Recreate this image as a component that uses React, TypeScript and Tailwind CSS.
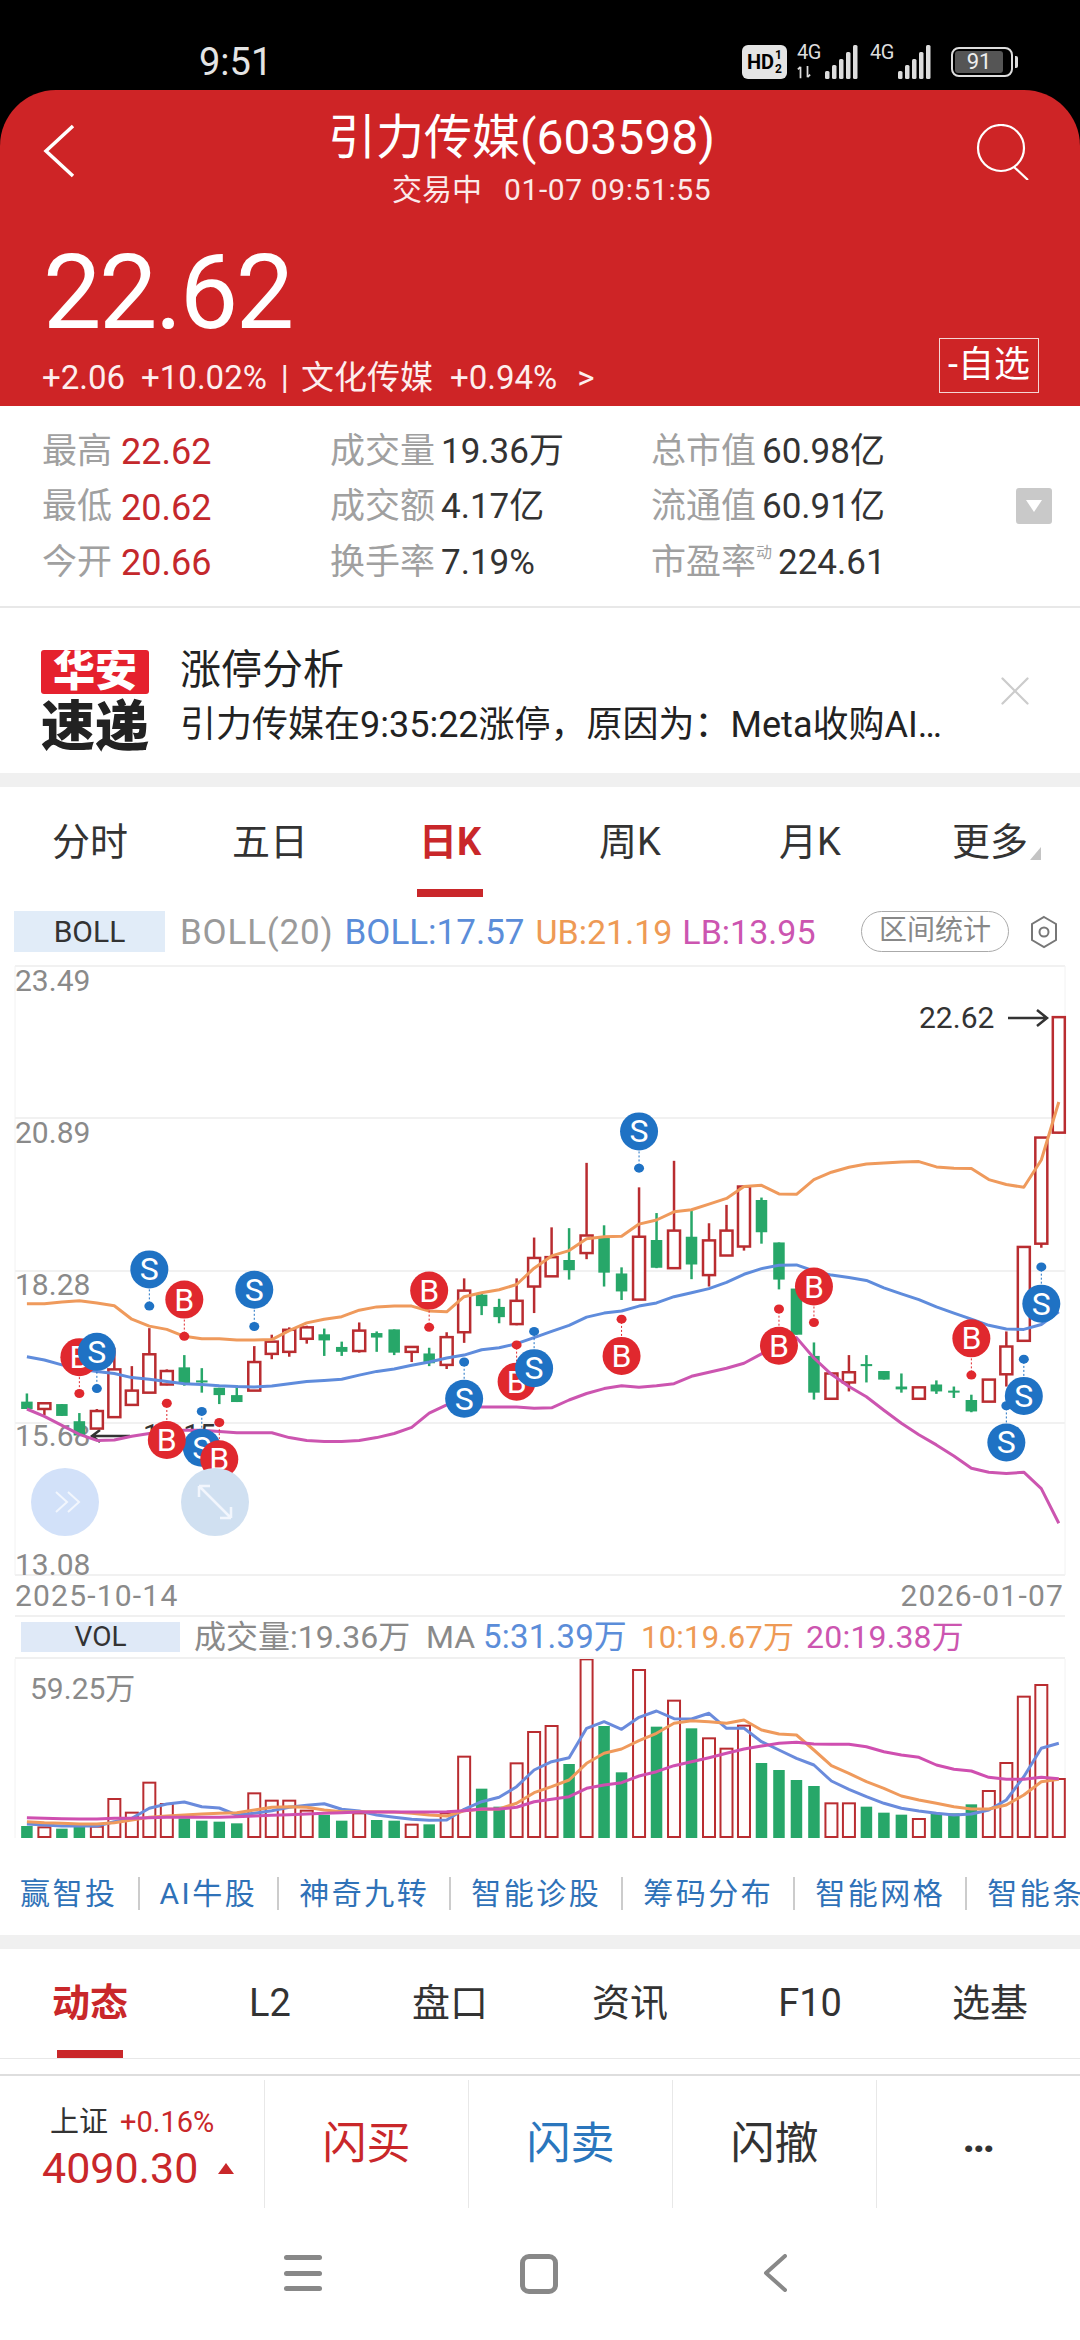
import React from 'react';
import { X } from 'lucide-react';

// [wickTop, bodyTop, bodyBottom, wickBottom, isRed] measured off the reference
type Candle = [number, number, number, number, number];

const candles: Candle[] = [
  [1062, 1082, 1100, 1100, 0], [1086, 1086, 1100, 1115, 1], [1088, 1088, 1117, 1117, 0], [1110, 1130, 1165, 1165, 0],
  [1100, 1105, 1148, 1148, 1], [950, 1003, 1120, 1120, 1], [995, 1055, 1090, 1090, 1], [902, 966, 1060, 1060, 1],
  [1003, 1007, 1040, 1042, 1], [968, 998, 1038, 1043, 0], [1000, 1030, 1035, 1060, 0], [1048, 1048, 1066, 1088, 0],
  [1042, 1066, 1083, 1083, 0], [946, 985, 1055, 1055, 1], [918, 935, 965, 978, 1], [900, 906, 960, 972, 1],
  [896, 900, 928, 940, 1], [903, 917, 932, 970, 0], [935, 948, 960, 970, 0], [888, 908, 958, 962, 1],
  [910, 914, 925, 960, 0], [905, 905, 962, 968, 0], [948, 948, 960, 985, 1], [950, 964, 988, 995, 0],
  [912, 924, 992, 1002, 1], [780, 810, 912, 938, 1], [818, 820, 848, 870, 0], [830, 850, 875, 890, 0],
  [780, 835, 892, 895, 1], [680, 730, 800, 865, 1], [655, 728, 775, 775, 1], [657, 735, 760, 783, 0],
  [497, 675, 718, 733, 1], [650, 677, 766, 800, 0], [753, 768, 812, 833, 0], [557, 678, 832, 832, 1],
  [620, 686, 754, 755, 0], [492, 663, 755, 755, 1], [610, 678, 746, 782, 0], [645, 687, 772, 800, 1],
  [600, 663, 724, 725, 1], [553, 555, 702, 712, 1], [582, 588, 667, 695, 0], [692, 692, 783, 807, 0],
  [805, 805, 918, 918, 0], [937, 970, 1060, 1077, 0], [1013, 1013, 1075, 1075, 1], [968, 1010, 1035, 1057, 1],
  [968, 990, 995, 1035, 0], [1007, 1007, 1028, 1028, 0], [1013, 1045, 1052, 1060, 0], [1047, 1047, 1075, 1075, 1],
  [1030, 1040, 1057, 1063, 0], [1045, 1055, 1060, 1073, 0], [1065, 1078, 1106, 1108, 0], [1028, 1028, 1082, 1082, 1],
  [910, 947, 1015, 1045, 1], [703, 703, 933, 933, 1], [435, 435, 695, 705, 1], [140, 140, 423, 425, 1],
];

const ubLine = [842, 842, 838, 835, 840, 847, 880, 897, 905, 922, 928, 928, 931, 931, 930, 908, 889, 880, 874, 858, 850, 848, 848, 860, 862, 825, 815, 808, 795, 755, 725, 712, 683, 678, 677, 647, 637, 617, 612, 598, 584, 555, 552, 573, 574, 538, 520, 508, 500, 497, 495, 494, 507, 510, 511, 538, 550, 557, 490, 348];
const bollLine = [972, 980, 992, 1002, 1008, 1013, 1023, 1027, 1033, 1038, 1040, 1043, 1045, 1046, 1044, 1038, 1033, 1030, 1027, 1017, 1008, 1002, 993, 985, 975, 968, 955, 950, 940, 925, 910, 895, 875, 865, 860, 848, 840, 825, 815, 805, 790, 770, 756, 748, 747, 762, 772, 778, 785, 803, 818, 832, 850, 865, 880, 895, 904, 905, 893, 862];
const lbLine = [1100, 1118, 1140, 1162, 1177, 1176, 1167, 1160, 1155, 1152, 1152, 1155, 1158, 1158, 1158, 1170, 1177, 1180, 1180, 1177, 1170, 1160, 1145, 1110, 1090, 1090, 1095, 1095, 1095, 1098, 1097, 1078, 1062, 1050, 1043, 1047, 1043, 1038, 1020, 1010, 1000, 988, 965, 935, 925, 975, 1015, 1045, 1070, 1103, 1135, 1163, 1188, 1215, 1245, 1255, 1258, 1255, 1295, 1380];

// [index, label, circleY, dotY]
const markers: [number, string, number, number][] = [
  [3, 'B', 973, 1062], [4, 'S', 960, 1050], [7, 'S', 758, 848], [9, 'B', 832, 922], [13, 'S', 808, 898],
  [10, 'S', 1195, 1106], [8, 'B', 1176, 1086], [11, 'B', 1223, 1133], [23, 'B', 810, 900], [25, 'S', 1075, 985],
  [28, 'B', 1033, 943], [29, 'S', 1000, 910], [35, 'S', 420, 510], [34, 'B', 970, 880], [43, 'B', 945, 855],
  [45, 'B', 800, 888], [54, 'B', 927, 1017], [58, 'S', 842, 752], [56, 'S', 1182, 1092], [57, 'S', 1068, 978],
];

const volBars: [number, number][] = [
  [678, 0], [682, 1], [686, 0], [680, 0], [680, 1], [597, 1], [638, 1], [548, 1], [612, 1], [655, 0],
  [662, 0], [665, 0], [670, 0], [580, 1], [602, 1], [602, 1], [632, 1], [645, 0], [662, 0], [640, 1],
  [660, 0], [662, 0], [674, 1], [673, 0], [640, 1], [470, 1], [566, 0], [620, 0], [490, 1], [396, 1],
  [378, 1], [492, 0], [178, 1], [378, 0], [517, 0], [210, 1], [380, 0], [302, 1], [385, 0], [415, 1],
  [446, 1], [377, 1], [489, 0], [510, 0], [540, 0], [558, 0], [610, 1], [610, 1], [620, 0], [638, 0],
  [644, 0], [657, 1], [640, 0], [640, 0], [613, 0], [573, 1], [489, 1], [290, 1], [255, 1], [537, 1],
];

const volMa5 = [672, 675, 678, 678, 678, 665, 655, 625, 612, 606, 620, 624, 645, 640, 632, 622, 616, 611, 628, 633, 645, 652, 658, 661, 660, 628, 605, 592, 560, 510, 485, 473, 385, 365, 388, 352, 333, 356, 357, 340, 385, 385, 425, 450, 475, 495, 543, 568, 590, 610, 625, 633, 640, 645, 642, 630, 600, 530, 445, 430];
const volMa10 = [665, 668, 670, 672, 672, 668, 660, 652, 648, 645, 642, 640, 638, 630, 622, 620, 622, 630, 635, 635, 635, 636, 640, 645, 648, 632, 628, 627, 610, 578, 560, 540, 490, 460, 447, 422, 400, 370, 362, 365, 370, 360, 390, 402, 405, 450, 497, 520, 545, 565, 588, 600, 610, 620, 627, 627, 615, 585, 545, 538];
const volMa20 = [653, 655, 656, 657, 657, 655, 655, 653, 652, 652, 652, 652, 650, 648, 646, 644, 642, 640, 638, 636, 636, 636, 636, 636, 635, 632, 627, 627, 622, 605, 598, 590, 565, 555, 548, 528, 515, 497, 485, 473, 460, 447, 438, 430, 427, 432, 433, 433, 440, 455, 465, 472, 495, 508, 513, 532, 538, 538, 532, 536];

const cx = (i: number) => 26.9 + 17.49 * i;
const ky = (p: number) => 960 + p / 2.45;
const vy = (p: number) => 1600 + p / 3;

const RED = '#b92c30';
const GREEN = '#27a769';

const toPoints = (vals: number[], conv: (p: number) => number) =>
  vals.map((v, i) => `${cx(i).toFixed(1)},${conv(v).toFixed(1)}`).join(' ');

const KLineChart = () => (
  <svg viewBox="0 960 1080 655" className="block w-[1080px] h-[655px]">
    {[966, 1118, 1271, 1423, 1575].map(y => (
      <line key={y} x1="15" x2="1065" y1={y} y2={y} stroke="#ececec" strokeWidth="1.5" />
    ))}
    <line x1="15" x2="15" y1="966" y2="1575" stroke="#f2f2f2" />
    <line x1="1065" x2="1065" y1="966" y2="1575" stroke="#f2f2f2" />

    <g fill="#8a8a8a" fontSize="30">
      <text x="15" y="991">23.49</text>
      <text x="15" y="1143">20.89</text>
      <text x="15" y="1295">18.28</text>
      <text x="15" y="1446">15.68</text>
      <text x="15" y="1575">13.08</text>
      <text x="15" y="1606" letterSpacing="1.2">2025-10-14</text>
      <text x="1064" y="1606" letterSpacing="1.2" textAnchor="end">2026-01-07</text>
    </g>

    {/* low price callout, mostly hidden under the markers */}
    <text x="143" y="1445" fontSize="29" fill="#333">15.15</text>
    <path d="M130 1436H92M100 1430l-8 6 8 6" fill="none" stroke="#333" strokeWidth="2.5" />

    {candles.map(([wt, bt, bb, wb, up], i) => {
      const color = up ? RED : GREEN;
      const w = up ? 12 : 11.5;
      return (
        <g key={i}>
          <line x1={cx(i)} x2={cx(i)} y1={ky(wt)} y2={ky(wb)} stroke={color} strokeWidth="2.5" />
          <rect
            x={cx(i) - w / 2}
            y={ky(bt)}
            width={w}
            height={ky(bb) - ky(bt)}
            fill={up ? '#fff' : color}
            stroke={up ? color : 'none'}
            strokeWidth={up ? 2.5 : 0}
          />
        </g>
      );
    })}

    <polyline points={toPoints(ubLine, ky)} fill="none" stroke="#ef9a5c" strokeWidth="3" strokeLinejoin="round" />
    <polyline points={toPoints(bollLine, ky)} fill="none" stroke="#5f8cdc" strokeWidth="3" strokeLinejoin="round" />
    <polyline points={toPoints(lbLine, ky)} fill="none" stroke="#cc55b0" strokeWidth="3" strokeLinejoin="round" />

    {markers.map(([i, label, cy, dotY]) => {
      const color = label === 'S' ? '#1f72c4' : '#e0282e';
      return (
        <g key={`${i}${label}`}>
          <line x1={cx(i)} x2={cx(i)} y1={ky(cy)} y2={ky(dotY)} stroke={color} strokeWidth="1" strokeDasharray="2 2" />
          <ellipse cx={cx(i)} cy={ky(dotY)} rx="5" ry="4.5" fill={color} />
          <circle cx={cx(i)} cy={ky(cy)} r="19" fill={color} />
          <text x={cx(i)} y={ky(cy) + 11} textAnchor="middle" fontSize="32" fill="#fff">{label}</text>
        </g>
      );
    })}

    <text x="919" y="1028" fontSize="30" fill="#333">22.62</text>
    <path d="M1008 1018H1047M1037 1010l10 8-10 8" fill="none" stroke="#333" strokeWidth="2.5" />

    <circle cx="65" cy="1502" r="34" fill="#d2e1f9" />
    <path d="M56 1492l11 10-11 10M68 1492l11 10-11 10" fill="none" stroke="#f2f6fd" strokeWidth="2" />
    <circle cx="215" cy="1502" r="34" fill="#d0e0f1" />
    <path d="M199 1486l32 32M199 1486h11M199 1486v11M231 1518h-11M231 1518v-11" fill="none" stroke="#f2f6fd" strokeWidth="2.5" />
  </svg>
);

const VolumeChart = () => (
  <svg viewBox="0 1659 1080 181" className="block w-[1080px] h-[181px]">
    <line x1="15" x2="15" y1="1659" y2="1838" stroke="#f2f2f2" />
    <line x1="1065" x2="1065" y1="1659" y2="1838" stroke="#f2f2f2" />
    <text x="30" y="1699" fontSize="30" fill="#8a8a8a">59.25万</text>
    {volBars.map(([top, up], i) =>
      up ? (
        <rect key={i} x={cx(i) - 6} y={vy(top)} width="12" height={1837 - vy(top)} fill="#fffdfd" stroke={RED} strokeWidth="2" />
      ) : (
        <rect key={i} x={cx(i) - 5.75} y={vy(top)} width="11.5" height={1838 - vy(top)} fill={GREEN} />
      )
    )}
    <polyline points={toPoints(volMa5, vy)} fill="none" stroke="#6a8bdc" strokeWidth="3" strokeLinejoin="round" />
    <polyline points={toPoints(volMa10, vy)} fill="none" stroke="#ef9a5c" strokeWidth="3" strokeLinejoin="round" />
    <polyline points={toPoints(volMa20, vy)} fill="none" stroke="#cf4fb0" strokeWidth="3" strokeLinejoin="round" />
  </svg>
);

const SignalBars = ({ arrows }: { arrows?: boolean }) => (
  <div className="relative w-[66px] h-[34px]">
    <span className="absolute left-[0px] top-[-3px] text-[20px] leading-[20px] tracking-[-0.5px] text-[#ddd]">4G</span>
    {arrows && (
      <svg viewBox="0 0 16 16" className="absolute left-[0px] bottom-[0px] w-[14px] h-[14px]">
        <path d="M4 15V2M1 5l3-3M12 1v13M15 11l-3 3" fill="none" stroke="#ddd" strokeWidth="2" />
      </svg>
    )}
    <svg viewBox="0 0 50 34" className="absolute right-[0px] top-[0px] w-[50px] h-[34px]">
      {[[16, 8], [23, 14], [30, 20], [37, 27], [44, 34]].map(([x, h]) => (
        <rect key={x} x={x - 4} y={34 - h} width="4.5" height={h} rx="1.5" fill="#ddd" />
      ))}
    </svg>
  </div>
);

const StatusBar = () => (
  <div className="h-[90px] bg-black flex items-start pt-[42px] pl-[199px] pr-[62px] justify-between">
    <span className="text-[38px] leading-[40px] text-[#e4e4e4]">9:51</span>
    <div className="flex items-center gap-[2px] mt-[3px]">
      <div className="w-[45px] h-[34px] bg-[#e4e4e4] rounded-[6px] flex items-center justify-center text-black font-bold leading-none">
        <span className="text-[20px]">HD</span>
        <span className="flex flex-col text-[12px] leading-[14px] ml-[1px]"><span>1</span><span>2</span></span>
      </div>
      <div className="ml-[8px]"><SignalBars arrows /></div>
      <div className="ml-[5px]"><SignalBars /></div>
      <div className="ml-[13px] flex items-center">
        <div className="w-[62px] h-[30px] border-[2px] border-[#ddd] rounded-[8px] p-[2px]">
          <div className="w-[48px] h-full bg-[#555] rounded-[3px] text-[22px] leading-[22px] text-center text-[#eee]">91</div>
        </div>
        <div className="w-[3px] h-[12px] ml-[2px] bg-[#ddd] rounded-r-[2px]" />
      </div>
    </div>
  </div>
);

const Header = () => (
  <div className="h-[316px] bg-[#ce2426] rounded-t-[56px] text-white pt-[22px] flex flex-col">
    <div className="h-[50px] pl-[43px] pr-[48px] flex items-start justify-between">
      <svg viewBox="0 0 32 54" className="w-[32px] h-[54px] mt-[12px]">
        <path d="M30 2L3 27l27 25" fill="none" stroke="#fff" strokeWidth="3.5" />
      </svg>
      <span className="text-[48px] leading-[50px] mt-[1px] mr-[8px]">引力传媒(603598)</span>
      <svg viewBox="0 0 56 56" className="w-[56px] h-[56px] mt-[12px]">
        <circle cx="25" cy="24" r="23" fill="none" stroke="#fff" strokeWidth="2.2" />
        <path d="M38 43l14 13" fill="none" stroke="#fff" strokeWidth="2.2" />
      </svg>
    </div>
    <div className="mt-[8px] h-[40px] pl-[392px] text-[30px] leading-[40px] whitespace-nowrap text-[#fbeaea]">
      交易中<span className="ml-[22px] tracking-[0.6px]">01-07 09:51:55</span>
    </div>
    <div className="mt-[32px] h-[96px] pl-[43px] pt-[3px] text-[104px] leading-[96px] tracking-[-2.5px]">22.62</div>
    <div className="h-[55px] pl-[42px] pr-[41px] flex justify-between">
      <div className="self-end text-[33px] leading-[30px] whitespace-nowrap text-[#fdeeee]">
        <span>+2.06</span>
        <span className="ml-[16px]">+10.02%</span>
        <span className="ml-[14px]">|</span>
        <span className="ml-[12px]">文化传媒</span>
        <span className="ml-[17px]">+0.94%</span>
        <span className="ml-[20px]">{'>'}</span>
      </div>
      <div className="w-[100px] h-[55px] border border-[#f5d5d5] text-[36px] leading-[52px] text-center whitespace-nowrap">-自选</div>
    </div>
  </div>
);

const stats = [
  [['最高', '22.62'], ['成交量', '19.36万'], ['总市值', '60.98亿']],
  [['最低', '20.62'], ['成交额', '4.17亿'], ['流通值', '60.91亿']],
  [['今开', '20.66'], ['换手率', '7.19%'], ['市盈率', '224.61']],
];

const StatsPanel = () => (
  <div className="h-[202px] border-b-[2px] border-[#e8e8e8] flex items-center pl-[42px] pr-[28px]">
    <div className="flex-1 mt-[3px]">
      {stats.map((row, r) => (
        <div key={r} className="grid grid-cols-[288px_321px_1fr] h-[55.5px] items-center text-[35px] whitespace-nowrap">
          {row.map(([label, value], c) => (
            <div key={label} className="flex items-center">
              <span className="text-[#a0a0a0]">{label}</span>
              {label === '市盈率' && <span className="text-[16px] text-[#a0a0a0] self-start mt-[4px]">动</span>}
              <span className={c === 0 ? 'ml-[9px] text-[36px] text-[#c4282c]' : 'ml-[6px] text-[35px] text-[#333]'}>{value}</span>
            </div>
          ))}
        </div>
      ))}
    </div>
    <div className="w-[36px] h-[36px] bg-[#c9c9c9] rounded-[3px] flex items-center justify-center">
      <div className="w-0 h-0 border-x-[8px] border-x-transparent border-t-[12px] border-t-white" />
    </div>
  </div>
);

const NewsFlash = () => (
  <div className="h-[165px] flex items-center pl-[41px] pr-[40px]">
    <div className="w-[108px] flex flex-col items-center mt-[16px]">
      <div className="w-[108px] h-[44px] bg-[#e5212e] rounded-[3px] text-white text-[42px] leading-[44px] font-black text-center whitespace-nowrap">华安</div>
      <div className="mt-[14px] text-[#222] text-[54px] leading-[40px] font-black whitespace-nowrap">速递</div>
    </div>
    <div className="ml-[31px] flex-1 mt-[14px] text-[#222]">
      <div className="text-[41px] leading-[52px]">涨停分析</div>
      <div className="mt-[3px] text-[36px] leading-[52px] whitespace-nowrap">引力传媒在9:35:22涨停，原因为：Meta收购AI…</div>
    </div>
    <X className="w-[50px] h-[50px] text-[#ccc] shrink-0" strokeWidth={1.1} />
  </div>
);

const Tabs = ({ items, active, more }: { items: string[]; active: number; more?: boolean }) => (
  <div className="grid grid-cols-6 h-full">
    {items.map((t, i) => (
      <div key={t} className="relative flex flex-col items-center">
        <div className={`flex-1 pt-[8px] flex items-center text-[38px] ${i === active ? 'text-[#c9272a] font-bold' : 'text-[#333]'}`}>{t}</div>
        <div className={`w-[66px] h-[8px] ${i === active ? 'bg-[#c9272a]' : ''}`} />
        {more && i === items.length - 1 && (
          <div className="absolute left-[130px] top-[60px] w-0 h-0 border-l-[11px] border-l-transparent border-b-[13px] border-b-[#c4c4c4]" />
        )}
      </div>
    ))}
  </div>
);

const links = ['赢智投', 'AI牛股', '神奇九转', '智能诊股', '筹码分布', '智能网格', '智能条'];

const App = () => (
  <div className="w-[1080px] h-[2340px] bg-white overflow-hidden font-[Roboto,'Noto_Sans_CJK_SC',sans-serif]">
    <div className="bg-black">
      <StatusBar />
      <Header />
    </div>
    <StatsPanel />
    <NewsFlash />
    <div className="h-[14px] bg-[#f0f0f0]" />

    <div className="h-[110px]">
      <Tabs items={['分时', '五日', '日K', '周K', '月K', '更多']} active={2} more />
    </div>

    <div className="h-[63px] pt-[14px] pl-[14px] pr-[22px] flex items-start">
      <div className="w-[151px] h-[41px] bg-[#e1ecf8] text-[#333] text-[30px] leading-[41px] text-center">BOLL</div>
      <div className="ml-[15px] text-[35px] leading-[43px] whitespace-nowrap">
        <span className="text-[#9a9a9a] tracking-[0.8px]">BOLL(20)</span>
        <span className="ml-[11px] text-[#5b8dd9]">BOLL:17.57</span>
        <span className="ml-[11px] text-[#ee9a55] text-[34px]">UB:21.19</span>
        <span className="ml-[10px] text-[#cc55b0] text-[34px]">LB:13.95</span>
      </div>
      <div className="ml-auto w-[148px] h-[41px] border border-[#aaa] rounded-full text-[#888] text-[28px] leading-[38px] text-center">区间统计</div>
      <svg viewBox="0 0 28 34" className="ml-[21px] w-[28px] h-[34px] mt-[4px]">
        <path d="M14 2l12 7v16l-12 7-12-7V9z" fill="none" stroke="#777" strokeWidth="2" />
        <circle cx="14" cy="17" r="4.5" fill="none" stroke="#777" strokeWidth="2" />
      </svg>
    </div>

    <KLineChart />

    <div className="mx-[15px] h-[44px] border-y-[2px] border-[#f0f0f0] pl-[6px] flex items-center">
      <div className="w-[159px] h-[30px] bg-[#dfe9f7] text-[#333] text-[28px] leading-[30px] text-center">VOL</div>
      <div className="ml-[14px] text-[32px] leading-[40px] whitespace-pre">
        <span className="text-[#8a8a8a]">成交量:19.36万  MA </span>
        <span className="text-[33px] tracking-[0.2px] text-[#5b8dd9]">5:31.39万</span>
        <span className="ml-[14px] text-[31px] tracking-[0.2px] text-[#ee9a55]">10:19.67万</span>
        <span className="ml-[12px] text-[32px] tracking-[0.2px] text-[#cc55b0]">20:19.38万</span>
      </div>
    </div>

    <VolumeChart />

    <div className="h-[95px] pt-[37px] pl-[20px] flex items-start gap-[20px] whitespace-nowrap overflow-hidden">
      {links.map((l, i) => (
        <React.Fragment key={l}>
          {i > 0 && <div className="w-[2px] h-[33px] bg-[#ccc] shrink-0" />}
          <span className="text-[#2f72b8] text-[30px] leading-[33px] tracking-[2.5px] shrink-0">{l}</span>
        </React.Fragment>
      ))}
    </div>
    <div className="h-[14px] bg-[#f0f0f0]" />

    <div className="h-[110px] border-b-[1px] border-[#e8e8e8]">
      <Tabs items={['动态', 'L2', '盘口', '资讯', 'F10', '选基']} active={0} />
    </div>

    <div className="mt-[15px] border-t-[2px] border-[#dedede] pt-[4px] flex h-[133px]">
      <div className="w-[264px] h-[128px] pl-[42px] pt-[20px]">
        <div className="flex items-center pl-[8px] whitespace-nowrap leading-[44px]">
          <span className="text-[29px] text-[#333]">上证</span>
          <span className="ml-[12px] text-[29px] text-[#c9272a]">+0.16%</span>
        </div>
        <div className="flex items-center text-[#c9272a]">
          <span className="text-[43px] leading-[48px]">4090.30</span>
          <div className="ml-[20px] w-0 h-0 border-x-[8px] border-x-transparent border-b-[11px] border-b-[#c9272a]" />
        </div>
      </div>
      {[['闪买', 'text-[#c9272a]'], ['闪卖', 'text-[#2a76bd]'], ['闪撤', 'text-[#333]']].map(([t, c]) => (
        <div key={t} className={`w-[204px] h-[128px] border-l border-[#e8e8e8] flex items-center justify-center text-[44px] ${c}`}>{t}</div>
      ))}
      <div className="w-[204px] h-[128px] border-l border-[#e8e8e8] flex items-center justify-center gap-[4px] text-[#333] text-[44px] pb-[14px]">
        <span className="font-bold leading-none">…</span>
      </div>
    </div>

    <div className="h-[132px] flex items-start pt-[47px] pl-[284px]">
      <div className="w-[38px] h-[38px] flex flex-col justify-between py-[1px]">
        <div className="h-[5px] bg-[#888] rounded-full" />
        <div className="h-[5px] bg-[#888] rounded-full" />
        <div className="h-[5px] bg-[#888] rounded-full" />
      </div>
      <div className="ml-[198px] w-[38px] h-[40px] border-[5px] border-[#888] rounded-[9px]" />
      <svg viewBox="0 0 24 38" className="ml-[205px] w-[24px] h-[38px]">
        <path d="M22 2L3 19l19 17" fill="none" stroke="#888" strokeWidth="4" strokeLinecap="round" strokeLinejoin="round" />
      </svg>
    </div>
  </div>
);

export default App;
